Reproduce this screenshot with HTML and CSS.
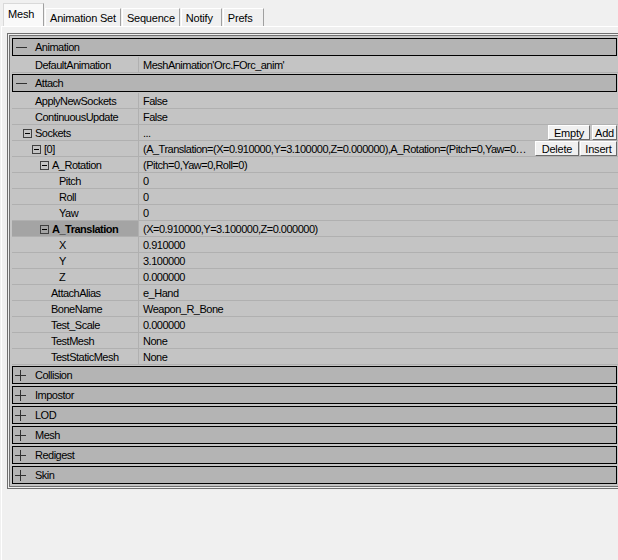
FILE: index.html
```html
<!DOCTYPE html>
<html>
<head>
<meta charset="utf-8">
<link rel="stylesheet" href="styles.css">
</head>
<body>
<div class="tabs">
  <div class="tab active">Mesh</div>
  <div class="tab">Animation Set</div>
  <div class="tab">Sequence</div>
  <div class="tab">Notify</div>
  <div class="tab">Prefs</div>
</div>
<div class="panel">
  <div class="grid">
    <div class="cat">
      <div class="cat-head"><span class="cat-icon minus"></span><span>Animation</span></div>
      <div class="rows">
        <div class="row"><div class="name i1">DefaultAnimation</div><div class="val">MeshAnimation'Orc.FOrc_anim'</div></div>
      </div>
    </div>
    <div class="cat">
      <div class="cat-head"><span class="cat-icon minus"></span><span>Attach</span></div>
      <div class="rows">
        <div class="row"><div class="name i1">ApplyNewSockets</div><div class="val">False</div></div>
        <div class="row"><div class="name i1">ContinuousUpdate</div><div class="val">False</div></div>
        <div class="row"><div class="name e1"><span class="box"></span>Sockets</div><div class="val"><span class="txt">...</span><span class="btn b-empty">Empty</span><span class="btn b-add">Add</span></div></div>
        <div class="row"><div class="name e2"><span class="box"></span>[0]</div><div class="val"><span class="txt">(A_Translation=(X=0.910000,Y=3.100000,Z=0.000000),A_Rotation=(Pitch=0,Yaw=0,Roll=0))</span><span class="btn b-delete">Delete</span><span class="btn b-insert">Insert</span></div></div>
        <div class="row"><div class="name e3"><span class="box"></span>A_Rotation</div><div class="val">(Pitch=0,Yaw=0,Roll=0)</div></div>
        <div class="row"><div class="name i4">Pitch</div><div class="val">0</div></div>
        <div class="row"><div class="name i4">Roll</div><div class="val">0</div></div>
        <div class="row"><div class="name i4">Yaw</div><div class="val">0</div></div>
        <div class="row"><div class="name e3 sel"><span class="box"></span>A_Translation</div><div class="val">(X=0.910000,Y=3.100000,Z=0.000000)</div></div>
        <div class="row"><div class="name i4">X</div><div class="val">0.910000</div></div>
        <div class="row"><div class="name i4">Y</div><div class="val">3.100000</div></div>
        <div class="row"><div class="name i4">Z</div><div class="val">0.000000</div></div>
        <div class="row"><div class="name i3">AttachAlias</div><div class="val">e_Hand</div></div>
        <div class="row"><div class="name i3">BoneName</div><div class="val">Weapon_R_Bone</div></div>
        <div class="row"><div class="name i3">Test_Scale</div><div class="val">0.000000</div></div>
        <div class="row"><div class="name i3">TestMesh</div><div class="val">None</div></div>
        <div class="row"><div class="name i3">TestStaticMesh</div><div class="val">None</div></div>
      </div>
    </div>
    <div class="cat closed"><div class="cat-head"><span class="cat-icon plus"></span><span>Collision</span></div></div>
    <div class="cat closed"><div class="cat-head"><span class="cat-icon plus"></span><span>Impostor</span></div></div>
    <div class="cat closed"><div class="cat-head"><span class="cat-icon plus"></span><span>LOD</span></div></div>
    <div class="cat closed"><div class="cat-head"><span class="cat-icon plus"></span><span>Mesh</span></div></div>
    <div class="cat closed"><div class="cat-head"><span class="cat-icon plus"></span><span>Redigest</span></div></div>
    <div class="cat closed"><div class="cat-head"><span class="cat-icon plus"></span><span>Skin</span></div></div>
  </div>
</div>
</body>
</html>
```
FILE: styles.css
```css
html, body {
  margin: 0;
  padding: 0;
}
body {
  width: 618px;
  height: 560px;
  overflow: hidden;
  background: #f0f0f0;
  font-family: "Liberation Sans", Arial, sans-serif;
  font-size: 11px;
  letter-spacing: -0.5px;
  color: #000;
}
.tabs {
  display: flex;
  align-items: flex-end;
  height: 26px;
  padding-left: 3px;
  letter-spacing: -0.2px;
}
.tab {
  box-sizing: border-box;
  min-width: 41px;
  height: 18px;
  padding: 2px 4px 0 4px;
  border-top: 1px solid #fff;
  border-left: 1px solid #fff;
  border-right: 1px solid #a0a0a0;
  line-height: 14px;
  margin-right: 1px;
}
.tab.active {
  height: 23px;
  padding: 3px 6px 0 4px;
  background: #f9f9f9;
  border-top: 1px solid #d9d9d9;
  border-left: 1px solid #d9d9d9;
  border-right: 1px solid #a0a0a0;
}
.panel {
  height: 534px;
  margin-left: 1px;
  border-top: 1px solid #fff;
  border-left: 1px solid #fff;
  padding: 6px 0 0 5px;
}
.grid {
  box-sizing: border-box;
  width: 615px;
  border: 3px double #707070;
  background: #c4c4c4;
  background-clip: padding-box;
  padding-top: 2px;
}
.cat-head {
  box-sizing: border-box;
  height: 18px;
  margin: 0 2px 1px 2px;
  border: 1px solid #000;
  background: #b4b4b4;
  display: flex;
  align-items: center;
}
.cat.closed .cat-head {
  margin-bottom: 2px;
}
.cat-icon {
  position: relative;
  width: 11px;
  height: 11px;
  margin-left: 3px;
  margin-right: 8px;
}
.cat-icon::before {
  content: "";
  position: absolute;
  left: 0;
  top: 5px;
  width: 11px;
  height: 1px;
  background: #303030;
}
.cat-icon.plus {
  margin-left: 2px;
  margin-right: 9px;
}
.cat-icon.plus::after {
  content: "";
  position: absolute;
  left: 5px;
  top: 0;
  width: 1px;
  height: 11px;
  background: #303030;
}
.rows {
  margin: 0 0 1px 2px;
}
.row {
  display: flex;
  height: 15px;
  border-bottom: 1px solid #b0b0b0;
  line-height: 17px;
}
.name {
  box-sizing: border-box;
  flex: 0 0 127px;
  border-right: 1px solid #b0b0b0;
  display: flex;
  align-items: flex-start;
  white-space: nowrap;
}
.name.sel {
  background: #a4a4a4;
  font-weight: bold;
}
.i1 { padding-left: 23px; }
.i3 { padding-left: 39px; }
.i4 { padding-left: 47px; }
.e1 { padding-left: 11px; }
.e2 { padding-left: 20px; }
.e3 { padding-left: 28px; }
.box {
  box-sizing: border-box;
  flex: 0 0 9px;
  width: 9px;
  height: 9px;
  margin-top: 4px;
  border: 1px solid #404040;
  margin-right: 3px;
  position: relative;
}
.box::after {
  content: "";
  position: absolute;
  left: 1px;
  top: 3px;
  width: 5px;
  height: 1px;
  background: #000;
}
.val {
  flex: 1;
  min-width: 0;
  display: flex;
  align-items: flex-start;
  padding: 0 2px 0 4px;
  white-space: nowrap;
  overflow: hidden;
}
.txt {
  flex: 1;
  min-width: 0;
  overflow: hidden;
  text-overflow: ellipsis;
  margin-right: 6px;
}
.btn {
  box-sizing: border-box;
  flex: 0 0 auto;
  height: 15px;
  margin-left: 2px;
  background: #f0f0f0;
  border: 1px solid;
  border-color: #fff #696969 #696969 #fff;
  line-height: 15px;
  text-align: center;
  letter-spacing: -0.2px;
}
.b-empty { width: 42px; }
.b-add { width: 25px; }
.b-delete { width: 44px; margin-left: 0; }
.b-insert { width: 37px; margin-left: 1px; }
```
